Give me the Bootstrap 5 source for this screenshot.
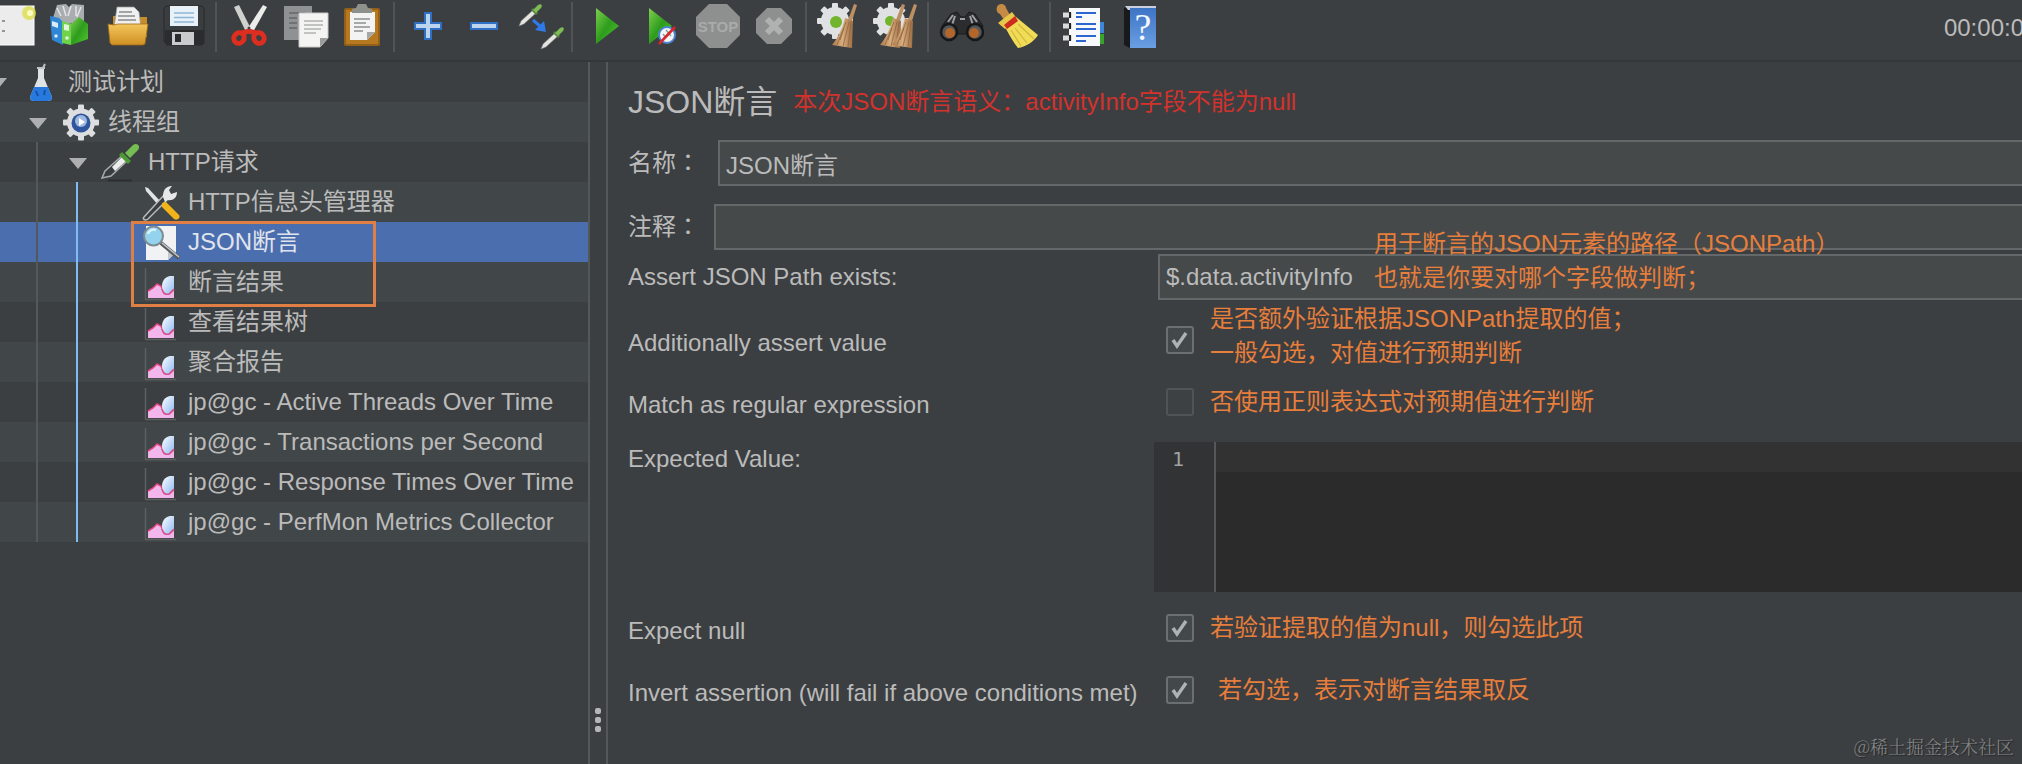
<!DOCTYPE html>
<html lang="zh-CN">
<head>
<meta charset="utf-8">
<meta name="viewport" content="width=device-width, initial-scale=1">
<title>JSON断言</title>
<link rel="stylesheet" href="https://cdn.jsdelivr.net/npm/bootstrap@5.3.0/dist/css/bootstrap.min.css">
<style>
  :root { --panel:#3c3f41; --stripe:#414648; --ink:#bbbbbb; --note:#e77e3b; --line:#646869; --field:#45494a; }
  body { background:var(--panel); color:var(--ink); font-family:"Liberation Sans","Noto Sans CJK SC",sans-serif; font-size:24px; line-height:34px; }
  .toolbar { padding:4px 0 12px; border-bottom:2px solid #343739; }
  .tools { margin-left:-13px; }
  .tool { width:56px; height:44px; padding:0 6px; border:0; background:none; }
  .tool svg { display:block; width:44px; height:44px; overflow:visible; }
  .tool-sep { width:2px; height:50px; margin:-2px 4px -4px; background:#515456; }
  .clock { height:44px; margin-right:-2px; line-height:48px; }
  .tree-pane { flex:0 0 588px; overflow:hidden; }
  .tree-row { height:40px; line-height:40px; white-space:nowrap; }
  .tree-row:nth-of-type(even) { background:var(--stripe); }
  .tree-row.selected { background:#4b6eaf; color:#e0e4ec; }
  .tree-row a { margin-left:-22px; color:inherit; text-decoration:none; }
  .lv1 a { padding-left:40px; } .lv2 a { padding-left:80px; } .lv3 a { padding-left:160px; }
  .twisty { width:40px; height:40px; flex:none; }
  .node-icon { width:46px; height:40px; margin-right:4px; flex:none; }
  .guide { width:2px; bottom:0; left:36px; top:80px; background:#55585a; }
  .guide-active { width:2px; bottom:0; left:76px; top:120px; background:#7fbcf5; }
  .mark-box { left:131px; top:159px; width:245px; height:86px; border:3px solid #e07f43; }
  .splitter { flex:0 0 20px; border:solid #555859; border-width:0 2px; padding-bottom:32px; gap:3px; }
  .splitter i { width:6px; height:6px; border-radius:2px; background:#b4b6b7; }
  .editor-pane { padding:20px 0 0 20px; overflow:hidden; min-width:0; }
  h1 { font-size:32px; line-height:40px; font-weight:400; }
  .warn { color:#d2322d; }
  .note { color:var(--note); white-space:nowrap; }
  .field { width:100%; min-width:0; height:46px; padding:0 6px; color:var(--ink); background:var(--field); border:2px solid var(--line); border-right:0; border-radius:0; font:inherit; outline:0; }
  .head-row { height:46px; margin-top:18px; }
  .name-label { width:90px; } .comment-label { width:86px; }
  .wide-colon { font-family:"Noto Sans CJK JP",sans-serif; line-height:1; }
  .prop { display:grid; grid-template-columns:530px minmax(0,1fr); }
  .prop > label { padding-top:6px; white-space:nowrap; }
  .h-path { height:46px; } .h-two { height:80px; } .h-one { height:44px; } .h-null { height:72px; } .h-inv { height:52px; }
  .expected { margin-top:18px; }
  .expected > label { padding-top:0; }
  .path-note { left:216px; top:-27px; }
  .tick { appearance:none; width:28px; height:28px; margin:0 0 0 8px; flex:none; border:2px solid #6b6f70; border-radius:3px; background:#43494a center/24px no-repeat; }
  .tick:checked { background-image:url("data:image/svg+xml,%3Csvg xmlns='http://www.w3.org/2000/svg' viewBox='0 0 24 24'%3E%3Cpath d='M5 12l4 6L18 5' fill='none' stroke='%23aeb2b2' stroke-width='3.4'/%3E%3C/svg%3E"); }
  .tick:not(:checked) { border-color:#515456; background-color:#3e4143; }
  .code { height:150px; margin-left:-4px; background:#2b2b2b; }
  .gutter { flex:0 0 62px; background:#313335; border-right:2px solid #555758; font:20px/34px "DejaVu Sans Mono",monospace; padding-left:18px; color:#a0a3a4; }
  .code textarea { resize:none; border:0; outline:0; padding:0 6px; color:var(--ink); font:20px/30px "DejaVu Sans Mono",monospace; background:linear-gradient(#323232 30px,#2b2b2b 30px); }
  .watermark { right:8px; bottom:4px; font:18px/28px "Noto Serif CJK SC","Liberation Serif","Noto Sans CJK SC",serif; color:#85888a; text-shadow:1px 1px 1px #222; font-weight:300; }
</style>
</head>
<body class="min-vh-100 d-flex flex-column overflow-hidden position-relative">

<svg width="0" height="0" class="position-absolute" aria-hidden="true">
  <defs>
    <linearGradient id="gGreen" x1="0" y1="0" x2="1" y2="1"><stop offset="0" stop-color="#7fd04e"/><stop offset=".5" stop-color="#2e9c1d"/><stop offset="1" stop-color="#54c830"/></linearGradient>
    <linearGradient id="gFolder" x1="0" y1="0" x2="0" y2="1"><stop offset="0" stop-color="#f3c65c"/><stop offset="1" stop-color="#cf8f22"/></linearGradient>
    <linearGradient id="gBlue" x1="0" y1="0" x2="0" y2="1"><stop offset="0" stop-color="#3d74c4"/><stop offset="1" stop-color="#6a9fe4"/></linearGradient>
    <linearGradient id="gLeaf" x1="0" y1="0" x2="1" y2="1"><stop offset="0" stop-color="#ffffff"/><stop offset="1" stop-color="#8cb8f2"/></linearGradient>
    <linearGradient id="gStraw" x1="0" y1="0" x2="1" y2="0"><stop offset="0" stop-color="#a9794b"/><stop offset=".5" stop-color="#d9ae7f"/><stop offset="1" stop-color="#9c6c42"/></linearGradient>
    <g id="gearShape">
      <circle r="14" />
      <g id="t4"><rect x="-3" y="-18" width="6" height="36" rx="1"/><rect x="-18" y="-3" width="36" height="6" rx="1"/></g>
      <use href="#t4" transform="rotate(45)"/>
    </g>
    <g id="pipette">
      <path d="M0 20L2 15 14 4l3 3L5 18z" fill="#e4e4e0" stroke="#777" stroke-width=".6"/>
      <path d="M12 4l2-2 5 5-2 2z" fill="#55803f"/>
      <path d="M14 4l5-5c3-2 5 0 3 3l-5 5z" fill="#7dbb55"/>
    </g>
    <g id="whisk">
      <path d="M24 0l3 1-5 16-4-1z" fill="#bd9064"/>
      <path d="M15 14l8 3-1 27-20-3C7 35 12 26 15 14z" fill="url(#gStraw)"/>
      <path d="M16 18L7 41M19 18l-6 24M21 18l-3 25M14 24l-4 12" stroke="#8d6540" stroke-width=".8" fill="none"/>
    </g>
    <symbol id="chart" viewBox="0 0 46 40">
      <path d="M7.500 6v31M7 37.500h31" stroke="#5d6063" stroke-width="1.500"/>
      <path d="M10 36V29l5-3 4-4 4 2 3 7 5 1 5-4v8z" fill="#f2b5ec"/>
      <path d="M10 29l5-3 4-4 4 2 3 7 5 1 5-4" fill="none" stroke="#e0457f" stroke-width="1.500"/>
      <path d="M24 24c0-5 3-9 8-10l4 0v14l-5 4c-5 1-7-3-7-8z" fill="url(#gLeaf)"/>
      <path d="M24 27c1 5 4 6 7 5l5-5" fill="none" stroke="#d4538d" stroke-width="1.500"/>
    </symbol>
    <symbol id="down" viewBox="0 0 40 40"><path d="M11 16h18l-9 11z" fill="#adafb0"/></symbol>
  </defs>
</svg>

<header class="toolbar d-flex justify-content-between overflow-hidden">
  <div class="tools d-flex" role="toolbar" aria-label="工具栏">
    <button class="tool" type="button" aria-label="新建"><svg viewBox="0 0 44 44"><rect x="5" y="2" width="36" height="39" fill="#ececec" stroke="#fff"/><path d="M9 17h3M9 27h3" stroke="#777" stroke-width="1.500"/><circle cx="36" cy="9" r="7" fill="#dfe04a" opacity=".8"/><circle cx="37" cy="9" r="3" fill="#fbfbc5"/></svg></button>
    <button class="tool" type="button" aria-label="模板"><svg viewBox="0 0 44 44"><path d="M4 14L8 1l9-1 3 3 3-3 12 1v17L18 20z" fill="#a9adaf"/><path d="M8 4l4 8M14 2l3 10M22 2l-3 10M27 2v10M32 3l-4 10" stroke="#e2e4e5" stroke-width="1.500"/><path d="M1 12l9 2 4 4v23L3 36z" fill="#2e86d4"/><path d="M3 17l6 2v5l-6-2z" fill="#d8ebfa"/><circle cx="7" cy="32" r="1.800" fill="#d8ebfa"/><path d="M13 17l9 3v21l-9-2z" fill="#6fd44a"/><path d="M22 20l8-7 9 7v15l-17 6z" fill="url(#gGreen)"/><path d="M15 20l5 1v6l-5-1z" fill="#e5f6df"/><circle cx="18" cy="34" r="1.800" fill="#e5f6df"/></svg></button>
    <button class="tool" type="button" aria-label="打开"><svg viewBox="0 0 44 44"><path d="M8 12h9v12H8zM30 13h12v20H30z" fill="#c78d2a"/><path d="M12 3h17l5 5 2 16H9z" fill="#f0f0f0" stroke="#999" stroke-width=".7"/><path d="M14 8h13M13 12h17M13 16h18" stroke="#8a8a8a" stroke-width="1.500"/><path d="M3 20l6 1 4-1h30l-3 20-2 1H7l-2-2z" fill="url(#gFolder)" stroke="#9c6a17" stroke-width=".8"/></svg></button>
    <button class="tool" type="button" aria-label="保存"><svg viewBox="0 0 44 44"><path d="M5 2h36l2 2v35l-2 2H6l-3-4V4z" fill="#3a3d40" stroke="#26282a"/><path d="M4 26h39v13l-2 2H6l-2-3z" fill="#2a2c2e"/><rect x="9" y="2" width="28" height="20" fill="#e8f1f8"/><path d="M13 9h20M13 13.500h20M13 18h20" stroke="#8cb6d8" stroke-width="1.500"/><rect x="11" y="28" width="22" height="13" fill="#c9cbcc"/><rect x="14" y="30" width="6" height="8" fill="#2a2c2e"/></svg></button>
    <span class="tool-sep"></span>
    <button class="tool" type="button" aria-label="剪切"><svg viewBox="0 0 44 44"><path d="M7 3l5-2 12 24-5 3z" fill="#cfd1cf"/><path d="M36 1l4 2-14 25-5-4z" fill="#ecedeb"/><g fill="none" stroke="#dd2e20" stroke-width="5"><ellipse cx="12" cy="34" rx="5" ry="5.500" transform="rotate(35 12 34)"/><ellipse cx="32" cy="34" rx="5" ry="5.500" transform="rotate(-35 32 34)"/><path d="M15 29l7-2 7 2"/></g><circle cx="22" cy="24" r="1.500" fill="#444"/></svg></button>
    <button class="tool" type="button" aria-label="复制"><svg viewBox="0 0 44 44"><rect x="1" y="2" width="28" height="34" fill="#8f9192"/><path d="M6 9h16M6 14h8M6 19h8M6 24h8" stroke="#6f7172" stroke-width="2"/><path d="M16 9h29v25l-8 9H16z" fill="#f4f4f2" stroke="#c8c8c8"/><path d="M45 34h-8v9z" fill="#9b9d9d"/><path d="M21 17h19M21 21h19M21 25h17M21 29h12" stroke="#b0b2b2" stroke-width="1.500"/></svg></button>
    <button class="tool" type="button" aria-label="粘贴"><svg viewBox="0 0 44 44"><rect x="6" y="5" width="34" height="36" rx="1" fill="#b7791f" stroke="#93601a" stroke-width="2"/><path d="M11 8h25v20l-8 8H11z" fill="#f2f3f2"/><path d="M36 28h-8v8z" fill="#a5a7a7"/><path d="M15 15h16M15 19h12M15 23h16M15 27h9" stroke="#8f9191" stroke-width="1.500"/><path d="M13 9V5l4-1 2-4h8l2 4 4 1v4z" fill="#8e918b"/></svg></button>
    <span class="tool-sep"></span>
    <button class="tool" type="button" aria-label="展开"><svg viewBox="0 0 44 44"><path d="M20 9h6v10h10v6H26v10h-6V25H10v-6h10z" fill="#bcd4ee" stroke="#2f70c4" stroke-width="2"/></svg></button>
    <button class="tool" type="button" aria-label="折叠"><svg viewBox="0 0 44 44"><rect x="10" y="19" width="26" height="6" fill="#bcd4ee" stroke="#2f70c4" stroke-width="2"/></svg></button>
    <button class="tool" type="button" aria-label="切换"><svg viewBox="0 0 44 44"><use href="#pipette" x="2" y="2"/><use href="#pipette" x="24" y="25"/><path d="M16 16l8 7" stroke="#2f79e8" stroke-width="3"/><path d="M29 28l-11-2 9-9z" fill="#2f79e8"/></svg></button>
    <span class="tool-sep"></span>
    <button class="tool" type="button" aria-label="启动"><svg viewBox="0 0 44 44"><path d="M13 4l23 18-23 18z" fill="url(#gGreen)"/></svg></button>
    <button class="tool" type="button" aria-label="无间隔启动"><svg viewBox="0 0 44 44"><path d="M10 4l23 18-23 18z" fill="url(#gGreen)"/><circle cx="28" cy="31" r="8" fill="#f2f5fa" stroke="#4a83cf" stroke-width="2"/><path d="M27 26l5 6M24 30l3 4" stroke="#7fa7a0" stroke-width="1.500"/><path d="M20 40L36 23" stroke="#d8262a" stroke-width="2.600"/></svg></button>
    <button class="tool" type="button" aria-label="停止"><svg viewBox="0 0 44 44"><path d="M14 0h18l13 13v18L32 44H14L1 31V13z" fill="#8e9090"/><text x="23" y="28" text-anchor="middle" font-family="Liberation Sans" font-weight="700" font-size="15" fill="#a9abab">STOP</text></svg></button>
    <button class="tool" type="button" aria-label="关闭"><svg viewBox="0 0 44 44"><path d="M16 4h14l11 11v14L30 40H16L5 29V15z" fill="#8e9090"/><path d="M16 15l14 14M30 15L16 29" stroke="#b0b2b2" stroke-width="6"/></svg></button>
    <span class="tool-sep"></span>
    <button class="tool" type="button" aria-label="清除"><svg viewBox="0 0 44 44"><use href="#gearShape" transform="translate(18 17)" fill="#dfe1e2"/><circle cx="19" cy="18" r="6" fill="#72b52c"/><use href="#whisk" x="13"/></svg></button>
    <button class="tool" type="button" aria-label="清除全部"><svg viewBox="0 0 44 44"><use href="#gearShape" transform="translate(18 17)" fill="#dfe1e2"/><circle cx="17" cy="17" r="5" fill="#72b52c"/><use href="#whisk" x="5"/><use href="#whisk" x="17"/></svg></button>
    <span class="tool-sep"></span>
    <button class="tool" type="button" aria-label="查找"><svg viewBox="0 0 44 44"><path d="M3 22l9-12 6-2 4 5h4l4-5 6 2 8 12-4 8H7z" fill="#2b2c2e" stroke="#191a1b"/><path d="M9 18l5-7M16 12l-3 9M38 18l-5-7M31 12l3 9M21 15h5" stroke="#9ba0a4" stroke-width="2"/><circle cx="10" cy="28" r="8" fill="#55585b" stroke="#161718" stroke-width="2.500"/><circle cx="36" cy="28" r="8" fill="#55585b" stroke="#161718" stroke-width="2.500"/><circle cx="11" cy="29" r="5" fill="#b4652a"/><circle cx="35" cy="29" r="5" fill="#b4652a"/></svg></button>
    <button class="tool" type="button" aria-label="重置查找"><svg viewBox="0 0 44 44"><path d="M2 3c2-5 9-3 9 1l4 7-6 5-4-6C2 9 1 6 2 3z" fill="#c58a45"/><path d="M3 19l14-11 6 8-13 9z" fill="#e6c84a"/><path d="M21 13l22 18c-4 7-13 12-20 13C18 38 14 30 10 23z" fill="#f0dc56"/><path d="M9 21l11-9 3 5-11 8z" fill="#cf2c20"/><path d="M16 26l10 16M20 24l12 15M23 20l16 15" stroke="#d3b83b" stroke-width="1.200"/></svg></button>
    <span class="tool-sep"></span>
    <button class="tool" type="button" aria-label="函数助手"><svg viewBox="0 0 44 44"><path d="M37 18h6v11h-6z" fill="#3d86dc"/><path d="M37 30h6v10h-6z" fill="#38a32c"/><path d="M8 4h31v38H8z" fill="#f8f9fa"/><path d="M15 9h20M15 13h6M15 20h20M15 25h20M15 32h20M15 37h10" stroke="#2d66cf" stroke-width="2"/><path d="M2 11h9M2 22h9M2 34h9" stroke="#d8dadb" stroke-width="5"/><path d="M9 8v6M9 19v6M9 31v6" stroke="#1f2123" stroke-width="2"/></svg></button>
    <button class="tool" type="button" aria-label="帮助"><svg viewBox="0 0 44 44"><path d="M7 4l6-2v42l-6-3z" fill="#17191b"/><path d="M8 2h31v4H11z" fill="#c9cfe0"/><rect x="13" y="4" width="26" height="40" fill="url(#gBlue)"/><text x="26" y="36" text-anchor="middle" font-family="Liberation Serif" font-size="38" fill="#f3f7ff">?</text></svg></button>
  </div>
  <span class="clock flex-shrink-0">00:00:0</span>
</header>

<main class="d-flex flex-grow-1 align-items-stretch">
  <nav class="tree-pane" aria-label="测试计划树">
    <div class="position-relative">
      <div class="tree-row lv0"><a class="d-flex" href="#"><svg class="twisty"><use href="#down"/></svg><svg class="node-icon" viewBox="0 0 46 40"><path d="M20 6h6v10l8 19c0 3-2 4-4 4H16c-2 0-4-1-4-4l8-19z" fill="#dfe3e6"/><path d="M16 25h14l4 10c0 3-2 4-4 4H16c-2 0-4-1-4-4z" fill="#2779dd"/><path d="M19 6h8M25 6l2-4" stroke="#bfc2c4" stroke-width="2"/><path d="M18 29l2 5M27 28l-1 5" stroke="#1552a8" stroke-width="2"/></svg>测试计划</a></div>
      <div class="tree-row lv1"><a class="d-flex" href="#"><svg class="twisty"><use href="#down"/></svg><svg class="node-icon" viewBox="0 0 46 40"><use href="#gearShape" transform="translate(23 20.500)" fill="#dcdee0"/><circle cx="23" cy="21" r="9.500" fill="#2f559c"/><circle cx="23" cy="19" r="6" fill="#9db9df"/><path d="M21 16l6 4-6 4z" fill="#fff"/></svg>线程组</a></div>
      <div class="tree-row lv2"><a class="d-flex" href="#"><svg class="twisty"><use href="#down"/></svg><svg class="node-icon" viewBox="0 0 46 40"><path d="M10 38.500h24" stroke="#2c2e30" stroke-width="2"/><path d="M4 36l3-7 18-16 5 5-17 16z" fill="#3a3d3f" stroke="#a8abac" stroke-width="1.500"/><path d="M14 25l11-11 4 4-12 11z" fill="#eceeee"/><path d="M24 10l9 9-3 3-9-9z" fill="#4d9a35"/><path d="M27 11l8-8c4-3 8 1 5 5l-8 8z" fill="#76bd52"/></svg>HTTP请求</a></div>
      <div class="tree-row lv3"><a class="d-flex" href="#"><svg class="node-icon" viewBox="0 0 46 40"><path d="M7 5l3 1 14 15-3 3L8 9z" fill="#e2e4e4"/><path d="M6 35l20-22 4 4-20 20c-3 2-6 0-4-2z" fill="#3c3f41" stroke="#b9bcbc" stroke-width="1.500"/><path d="M25 15c0-6 2-11 9-11l-3 4 2 4 6-2c0 6-4 9-10 8l-2 2z" fill="#e6e8e8"/><path d="M24 21l4-1 13 13c2 3-2 6-5 4L24 25z" fill="#f2b418"/></svg>HTTP信息头管理器</a></div>
      <div class="tree-row lv3 selected"><a class="d-flex" href="#" aria-current="true"><svg class="node-icon" viewBox="0 0 46 40"><path d="M8 4h30v26l-8 8H8z" fill="#f0f2f3"/><path d="M38 30l-8 8v-8z" fill="#c5c8ca"/><circle cx="15.500" cy="14" r="9.500" fill="#93d3ee" stroke="#7d8b93" stroke-width="2"/><path d="M10 12c1-4 5-5 8-4" stroke="#d9f2fb" stroke-width="2.500" fill="none"/><path d="M23 21l18 15" stroke="#55595c" stroke-width="4"/><path d="M24 21l17 14" stroke="#c5c8ca" stroke-width="1.500"/></svg>JSON断言</a></div>
      <div class="tree-row lv3"><a class="d-flex" href="#"><svg class="node-icon"><use href="#chart"/></svg>断言结果</a></div>
      <div class="tree-row lv3"><a class="d-flex" href="#"><svg class="node-icon"><use href="#chart"/></svg>查看结果树</a></div>
      <div class="tree-row lv3"><a class="d-flex" href="#"><svg class="node-icon"><use href="#chart"/></svg>聚合报告</a></div>
      <div class="tree-row lv3"><a class="d-flex" href="#"><svg class="node-icon"><use href="#chart"/></svg>jp@gc - Active Threads Over Time</a></div>
      <div class="tree-row lv3"><a class="d-flex" href="#"><svg class="node-icon"><use href="#chart"/></svg>jp@gc - Transactions per Second</a></div>
      <div class="tree-row lv3"><a class="d-flex" href="#"><svg class="node-icon"><use href="#chart"/></svg>jp@gc - Response Times Over Time</a></div>
      <div class="tree-row lv3"><a class="d-flex" href="#"><svg class="node-icon"><use href="#chart"/></svg>jp@gc - PerfMon Metrics Collector</a></div>
      <span class="guide position-absolute"></span>
      <span class="guide-active position-absolute"></span>
      <span class="mark-box position-absolute"></span>
    </div>
  </nav>

  <div class="splitter d-flex flex-column justify-content-end align-items-center"><i></i><i></i><i></i></div>

  <section class="editor-pane flex-grow-1">
    <div class="d-flex align-items-center gap-3">
      <h1 class="m-0">JSON断言</h1>
      <span class="warn">本次JSON断言语义：activityInfo字段不能为null</span>
    </div>
    <div class="head-row d-flex align-items-center">
      <label class="name-label flex-shrink-0" for="fName">名称<span class="wide-colon" lang="ja">：</span></label>
      <input class="field" id="fName" type="text" value="JSON断言">
    </div>
    <div class="head-row d-flex align-items-center mb-1">
      <label class="comment-label flex-shrink-0" for="fComment">注释<span class="wide-colon" lang="ja">：</span></label>
      <input class="field" id="fComment" type="text">
    </div>

    <div class="prop h-path">
      <label for="fPath">Assert JSON Path exists:</label>
      <div class="position-relative">
        <input class="field" id="fPath" type="text" value="$.data.activityInfo">
        <div class="note path-note position-absolute">用于断言的JSON元素的路径（JSONPath）<br>也就是你要对哪个字段做判断；</div>
      </div>
    </div>
    <div class="prop h-two align-items-center">
      <label for="cValue">Additionally assert value</label>
      <div class="d-flex align-items-center"><input class="tick" id="cValue" type="checkbox" checked><span class="note ps-3 pb-2">是否额外验证根据JSONPath提取的值；<br>一般勾选，对值进行预期判断</span></div>
    </div>
    <div class="prop h-one align-items-center">
      <label for="cRegex">Match as regular expression</label>
      <div class="d-flex align-items-center"><input class="tick" id="cRegex" type="checkbox"><span class="note ps-3">否使用正则表达式对预期值进行判断</span></div>
    </div>
    <div class="prop expected">
      <label for="fExpected">Expected Value:</label>
      <div class="code d-flex"><div class="gutter">1</div><textarea class="flex-grow-1" id="fExpected" spellcheck="false"></textarea></div>
    </div>
    <div class="prop h-null align-items-center">
      <label for="cNull">Expect null</label>
      <div class="d-flex align-items-center"><input class="tick" id="cNull" type="checkbox" checked><span class="note ps-3">若验证提取的值为null，则勾选此项</span></div>
    </div>
    <div class="prop h-inv align-items-center">
      <label for="cInvert">Invert assertion (will fail if above conditions met)</label>
      <div class="d-flex align-items-center"><input class="tick" id="cInvert" type="checkbox" checked><span class="note ps-4">若勾选，表示对断言结果取反</span></div>
    </div>
  </section>
</main>
<div class="watermark position-absolute">@稀土掘金技术社区</div>
<script src="https://cdn.jsdelivr.net/npm/bootstrap@5.3.0/dist/js/bootstrap.bundle.min.js"></script>
</body>
</html>
